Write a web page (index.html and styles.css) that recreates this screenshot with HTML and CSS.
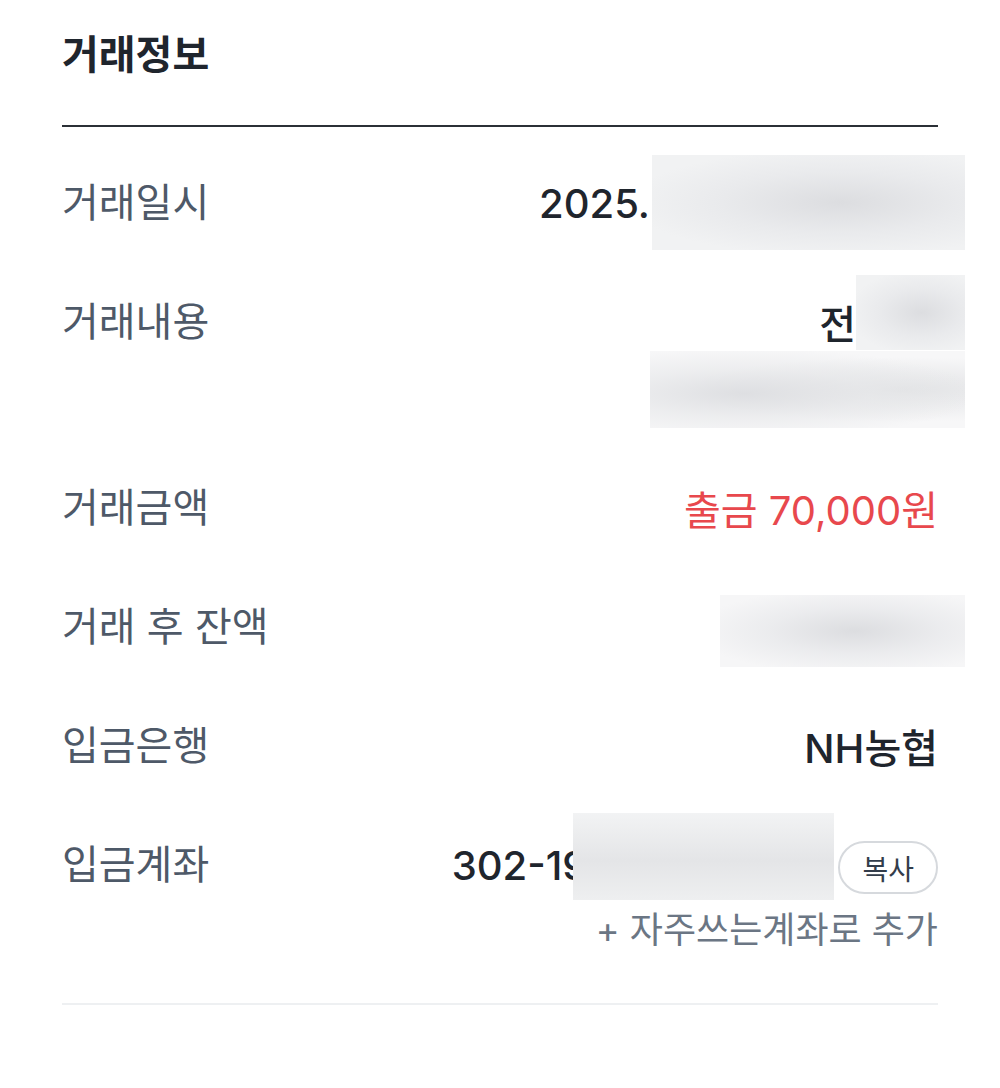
FILE: index.html
```html
<!DOCTYPE html>
<html lang="ko">
<head>
  <meta charset="UTF-8" />
  <meta name="viewport" content="width=device-width, initial-scale=1" />
  <title>거래정보</title>
  <link rel="stylesheet" href="styles.css">
</head>
<body>

  <section class="info">
    <h2 class="info-title">거래정보</h2>

    <div class="info-list">
      <div class="row">
        <div class="label">거래일시</div>
        <div class="value">
          <div class="line">2025.<span class="mask mask-date"></span></div>
        </div>
      </div>

      <div class="row">
        <div class="label">거래내용</div>
        <div class="value">
          <div class="line">전<span class="mask mask-desc"></span></div>
          <div class="line line-sub"><span class="mask mask-desc2"></span></div>
        </div>
      </div>

      <div class="row">
        <div class="label">거래금액</div>
        <div class="value">
          <div class="line amount">출금 70,000원</div>
        </div>
      </div>

      <div class="row">
        <div class="label">거래 후 잔액</div>
        <div class="value">
          <div class="line"><span class="mask mask-balance"></span></div>
        </div>
      </div>

      <div class="row">
        <div class="label">입금은행</div>
        <div class="value">
          <div class="line">NH농협</div>
        </div>
      </div>

      <div class="row">
        <div class="label">입금계좌</div>
        <div class="value">
          <div class="line">302-19<span class="mask mask-account"></span><button class="copy">복사</button></div>
          <div class="add">+ 자주쓰는계좌로 추가</div>
        </div>
      </div>
    </div>
  </section>

</body>
</html>
```

FILE: styles.css
```css
* {
  box-sizing: border-box;
}

body {
  margin: 0;
  background: #fff;
  font-family: "Inter", "Noto Sans CJK KR", sans-serif;
  color: #191f28;
}

.info {
  padding: 0 62px;
}

.info-title {
  margin: 0;
  padding: 30px 0 45px;
  font-size: 40px;
  line-height: 50px;
  font-weight: 700;
  color: #1f252d;
  border-bottom: 2px solid #2b3036;
}

.info-list {
  display: flex;
  flex-direction: column;
  gap: 69px;
  padding: 51px 0 53px;
  border-bottom: 2px solid #eef0f2;
}

.row {
  display: flex;
  justify-content: space-between;
  align-items: flex-start;
}

.label {
  font-size: 40px;
  line-height: 50px;
  color: #4e5968;
  white-space: nowrap;
}

.value {
  display: flex;
  flex-direction: column;
  align-items: flex-end;
}

.line {
  display: flex;
  align-items: center;
  height: 50px;
  font-size: 40px;
  font-weight: 500;
  color: #1f252d;
  white-space: nowrap;
}

.line-sub {
  margin-top: 17px;
}

.amount {
  color: #e8484d;
  font-weight: 400;
}

/* 가림 처리 */
.mask {
  display: inline-block;
  position: relative;
  background:
    radial-gradient(ellipse at 60% 50%, #dcdde0 0%, rgba(228, 229, 232, 0.6) 45%, rgba(246, 246, 247, 0) 80%),
    #f1f2f3;
  flex-shrink: 0;
}

.mask-date {
  width: 313px;
  height: 95px;
  margin: -23px -27px -22px 2px;
}

.mask-desc {
  width: 109px;
  height: 75px;
  margin: -35px -27px -15px 0;
}

.mask-desc2 {
  width: 315px;
  height: 77px;
  margin: -13px -27px -14px 0;
  background:
    radial-gradient(ellipse at 30% 55%, #dedfe2 0%, rgba(230, 231, 233, 0.6) 40%, rgba(250, 250, 250, 0) 75%),
    radial-gradient(ellipse at 80% 50%, #e2e3e5 0%, rgba(250, 250, 250, 0) 60%),
    #f7f7f8;
}

.mask-balance {
  width: 245px;
  height: 72px;
  margin: -7px -27px -15px 0;
  background:
    radial-gradient(ellipse at 55% 50%, #dcdde0 0%, rgba(228, 229, 232, 0.6) 45%, rgba(250, 250, 250, 0) 85%),
    #f6f6f7;
}

.mask-account {
  width: 261px;
  height: 87px;
  margin: -27px 4px -10px -14px;
  background:
    linear-gradient(180deg, #f2f3f4 0%, #e4e5e7 55%, #eeeff0 100%);
}

.copy {
  height: 53px;
  padding: 0 22px;
  margin-top: 5px;
  border: 2px solid #d6d9dd;
  border-radius: 27px;
  background: #fff;
  font-family: "Noto Sans CJK KR", sans-serif;
  font-size: 28px;
  font-weight: 400;
  color: #333d4b;
  cursor: pointer;
}

.add {
  margin-top: 20px;
  font-size: 36px;
  line-height: 40px;
  color: #6b7684;
  white-space: nowrap;
}
```
